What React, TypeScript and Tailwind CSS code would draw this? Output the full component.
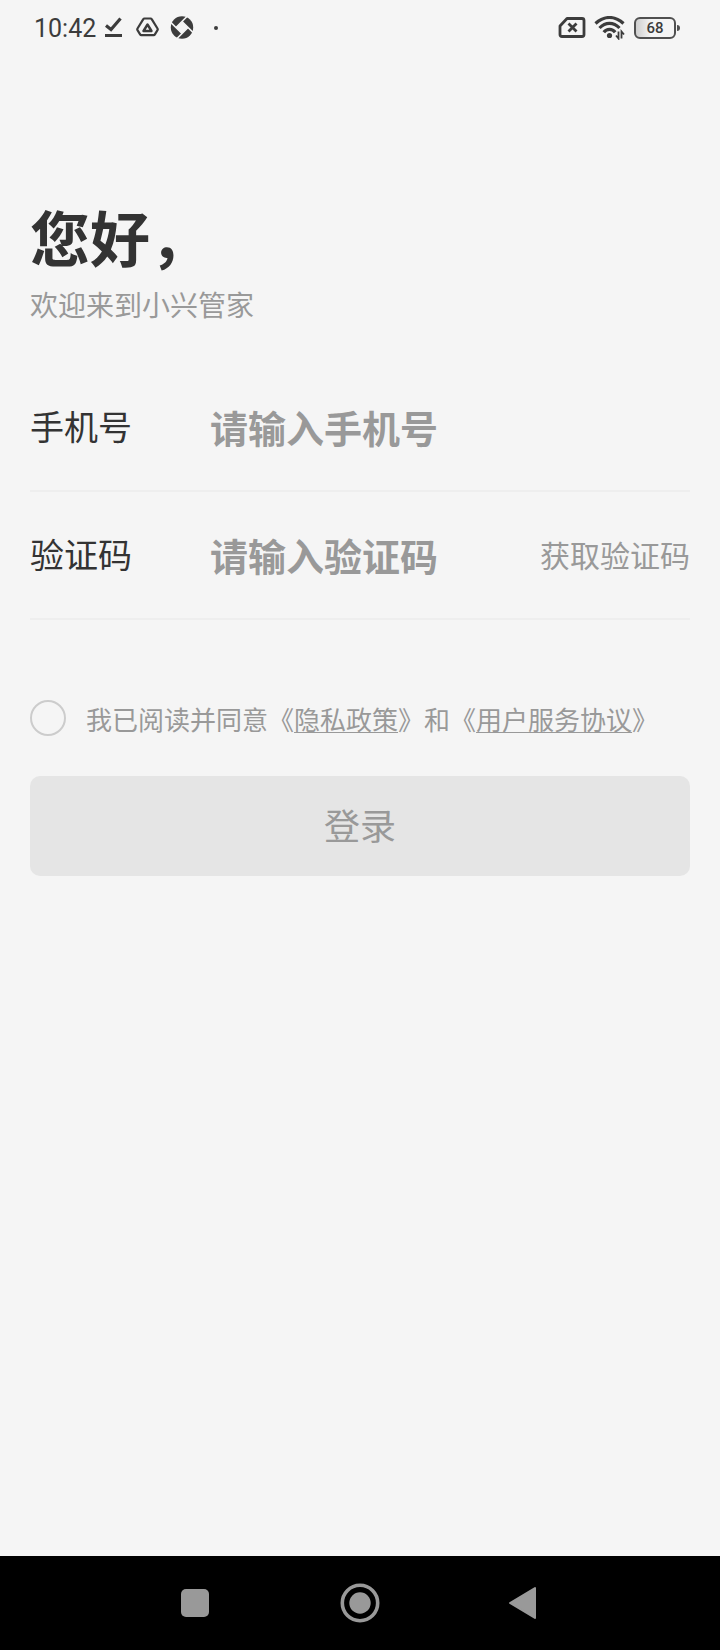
import React, { useState } from 'react';

interface Field {
  id: string;
  label: string;
  placeholder: string;
  action?: string;
}

const fields: Field[] = [
  { id: 'phone', label: '手机号', placeholder: '请输入手机号' },
  { id: 'code', label: '验证码', placeholder: '请输入验证码', action: '获取验证码' },
];

const StatusBar: React.FC = () => {
  return (
    <div className="flex h-14 items-center justify-between pr-10 pl-[34px] text-[#3c3c3c]">
      <div className="flex items-center">
        <span className="pt-0.5 font-[Roboto,sans-serif] text-[25px] leading-8">10:42</span>
        <svg className="ml-2 h-6 w-5" viewBox="0 0 20 24" fill="none" stroke="currentColor">
          <path d="M2 9.5 7 13.5 16.5 2.5" strokeWidth="3.2" />
          <path d="M1 19.5h17" strokeWidth="3" />
        </svg>
        <svg className="ml-3 h-6 w-6" viewBox="0 0 24 24" fill="none" stroke="currentColor">
          <path
            d="M8.4 2.500h6.2q.7 0 1.1.7l5.8 9.3q.5.8 0 1.6l-2.6 4.3q-.4.7-1.2.7H5.3q-.8 0-1.2-.7l-2.6-4.3q-.5-.8 0-1.6l5.8-9.3Q7.7 2.5 8.4 2.5Z"
            strokeWidth="2.2"
          />
          <path d="M11.5 8.500 15.5 15H7.5Z" strokeWidth="2.4" strokeLinejoin="round" />
        </svg>
        <svg className="ml-2.5 h-6 w-6" viewBox="0 0 24 24">
          <circle cx="12" cy="11.5" r="11.2" fill="currentColor" />
          <path d="M12 5.5 18 11.5 12 17.5 6 11.5Z" fill="#f5f5f5" />
          <path
            d="M6 11.5 18 -.5M12 5.5 24 17.5M18 11.5 6 23.5M12 17.5 0 5.5"
            stroke="#f5f5f5"
            strokeWidth="1.6"
          />
        </svg>
        <span className="ml-5 size-1 rounded-full bg-[#3c3c3c]" />
      </div>

      <div className="flex items-center">
        <svg className="h-6 w-7" viewBox="0 0 28 24" fill="none" stroke="currentColor">
          <path
            d="M9 2.5h15q2 0 2 2v14q0 2-2 2H4q-2 0-2-2v-8.5Z"
            strokeWidth="2.8"
            strokeLinejoin="round"
          />
          <path d="m10.5 7.5 8 8M18.5 7.5l-8 8" strokeWidth="2.8" />
        </svg>
        <svg className="ml-2 h-6 w-8" viewBox="0 0 32 24" fill="none" stroke="currentColor">
          <path d="M1.5 7.5Q8 1.5 15.5 1.5t14 6" strokeWidth="3.2" />
          <path d="M5.5 12Q10 7.300 15.5 7.3t10 4.7" strokeWidth="3.2" />
          <path d="M9.8 16.3Q12 13.3 15.5 13.3t5.7 3" strokeWidth="3.2" />
          <circle cx="15.5" cy="19.5" r="2.6" fill="currentColor" stroke="none" />
          <path d="M24.5 15.5v7l-2.5-3M27.5 22.5v-7l2.5 3" strokeWidth="1.8" />
        </svg>
        <div className="ml-2 flex items-center">
          <div className="flex h-[22px] w-[42px] items-center justify-center rounded-md border-2 border-[#505050] bg-linear-to-r from-[#cfcfcf] to-[#f5f5f5] to-40% font-[Roboto,sans-serif] text-[15px] font-medium">
            68
          </div>
          <span className="ml-px h-1.5 w-[3px] rounded-r-sm bg-[#505050]" />
        </div>
      </div>
    </div>
  );
};

const NavigationBar: React.FC = () => {
  return (
    <nav className="grid h-[94px] grid-cols-3 items-center justify-items-center bg-black px-28 text-[#999999]">
      <button type="button" aria-label="最近任务">
        <svg className="size-10" viewBox="0 0 40 40" fill="currentColor">
          <rect x="6" y="6" width="28" height="28" rx="5" />
        </svg>
      </button>
      <button type="button" aria-label="主屏幕">
        <svg className="size-10" viewBox="0 0 40 40" fill="currentColor">
          <circle cx="20" cy="20" r="17.7" fill="none" stroke="currentColor" strokeWidth="3.6" />
          <circle cx="20" cy="20" r="10.7" />
        </svg>
      </button>
      <button type="button" aria-label="返回">
        <svg className="size-10" viewBox="0 0 40 40" fill="currentColor">
          <path
            d="M5 20 30 5v30Z"
            stroke="currentColor"
            strokeWidth="2"
            strokeLinejoin="round"
          />
        </svg>
      </button>
    </nav>
  );
};

const App: React.FC = () => {
  const [agreed, setAgreed] = useState(false);

  return (
    <div className="flex min-h-screen flex-col bg-[#f5f5f5] font-['Noto_Sans_CJK_SC',sans-serif] text-[#333333]">
      <StatusBar />

      <main className="flex-1 px-[30px] pt-[140px]">
        <h1 className="text-[60px] leading-[80px] font-bold">您好，</h1>
        <p className="mt-2 text-[28px] leading-10 text-[#999999]">欢迎来到小兴管家</p>

        <form className="mt-10" onSubmit={(e) => e.preventDefault()}>
          {fields.map((field) => (
            <div
              key={field.id}
              className="flex h-32 items-center border-b-2 border-[#eeeeee] pb-0.5"
            >
              <label htmlFor={field.id} className="w-[180px] shrink-0 text-[34px] leading-[50px]">
                {field.label}
              </label>
              <input
                id={field.id}
                type="tel"
                placeholder={field.placeholder}
                className="h-14 min-w-0 flex-1 bg-transparent text-[38px] font-bold outline-none placeholder:text-[#999999]"
              />
              {field.action && (
                <button type="button" className="shrink-0 text-[30px] leading-[50px] text-[#999999]">
                  {field.action}
                </button>
              )}
            </div>
          ))}

          <div className="mt-20 flex h-9 items-center text-[26px] leading-[38px] text-[#999999]">
            <input
              id="agree"
              type="checkbox"
              checked={agreed}
              onChange={(e) => setAgreed(e.target.checked)}
              className="mr-5 size-9 shrink-0 appearance-none rounded-full border-2 border-[#cccccc] checked:bg-[#999999]"
            />
            <label htmlFor="agree" className="pt-0.5">
              我已阅读并同意《
              <a href="#privacy" className="underline decoration-1 underline-offset-2">
                隐私政策
              </a>
              》和《
              <a href="#terms" className="underline decoration-1 underline-offset-2">
                用户服务协议
              </a>
              》
            </label>
          </div>

          <button
            type="submit"
            className="mt-10 h-[100px] w-full rounded-[10px] bg-[#e5e5e5] pb-1 text-[36px] text-[#999999]"
          >
            登录
          </button>
        </form>
      </main>

      <NavigationBar />
    </div>
  );
};

export default App;
